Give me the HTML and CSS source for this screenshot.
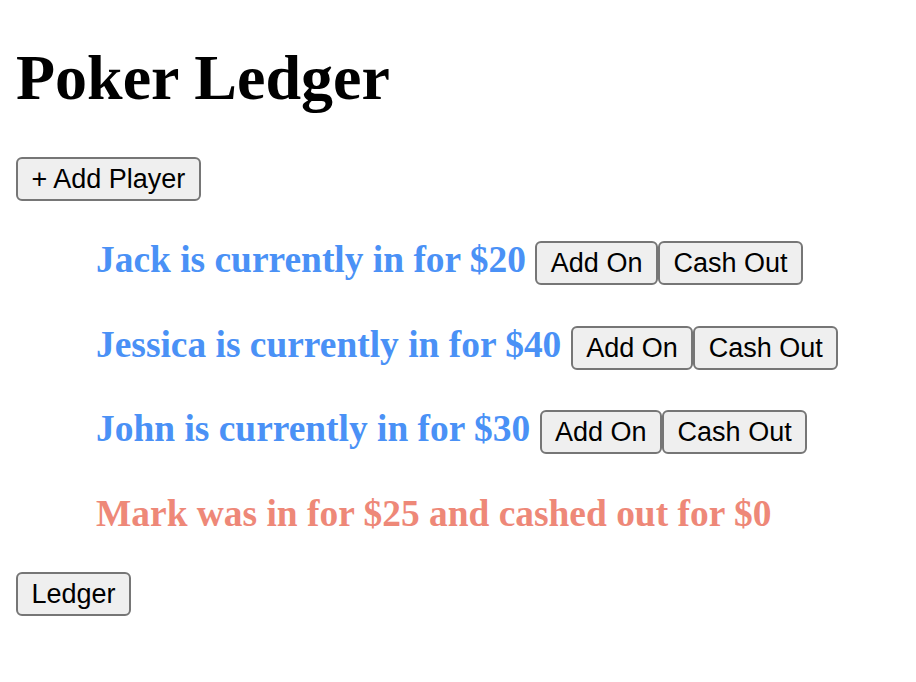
FILE: index.html
```html
<!DOCTYPE html>
<html>
<head>
<meta charset="utf-8">
<title>Poker Ledger</title>
<link rel="stylesheet" href="styles.css">
</head>
<body>
<h1 class="title">Poker Ledger</h1>
<div class="actions"><button class="btn">+ Add Player</button></div>
<ul class="players">
  <li><h3 class="player active">Jack is currently in for $20 <button class="btn">Add On</button><button class="btn">Cash Out</button></h3></li>
  <li><h3 class="player active">Jessica is currently in for $40 <button class="btn">Add On</button><button class="btn">Cash Out</button></h3></li>
  <li><h3 class="player active">John is currently in for $30 <button class="btn">Add On</button><button class="btn">Cash Out</button></h3></li>
  <li><h3 class="player out">Mark was in for $25 and cashed out for $0</h3></li>
</ul>
<div class="actions"><button class="btn">Ledger</button></div>
</body>
</html>
```

FILE: styles.css
```css
html, body {
  background: #ffffff;
}
body {
  margin: 0 16px 16px;
  font-family: "Liberation Serif", "Times New Roman", serif;
  font-size: 32px;
  color: #000;
}
.title {
  font-size: 64px;
  font-weight: bold;
  margin: 41px 0 42px;
}
.actions {
  margin: 0;
}
.btn {
  font-family: "Liberation Sans", Arial, sans-serif;
  font-size: 27px;
  line-height: 34px;
  padding: 3px 13.5px;
  margin: 0;
  border: 2px solid #767676;
  border-radius: 6px;
  background: #efefef;
  color: #000;
  vertical-align: baseline;
}
.players {
  list-style: none;
  margin: 32px 0;
  padding-left: 80px;
}
.player {
  font-size: 37.44px;
  font-weight: bold;
  margin: 37.44px 0;
}
.active {
  color: #4a91f6;
}
.out {
  color: #ee8878;
}
```
